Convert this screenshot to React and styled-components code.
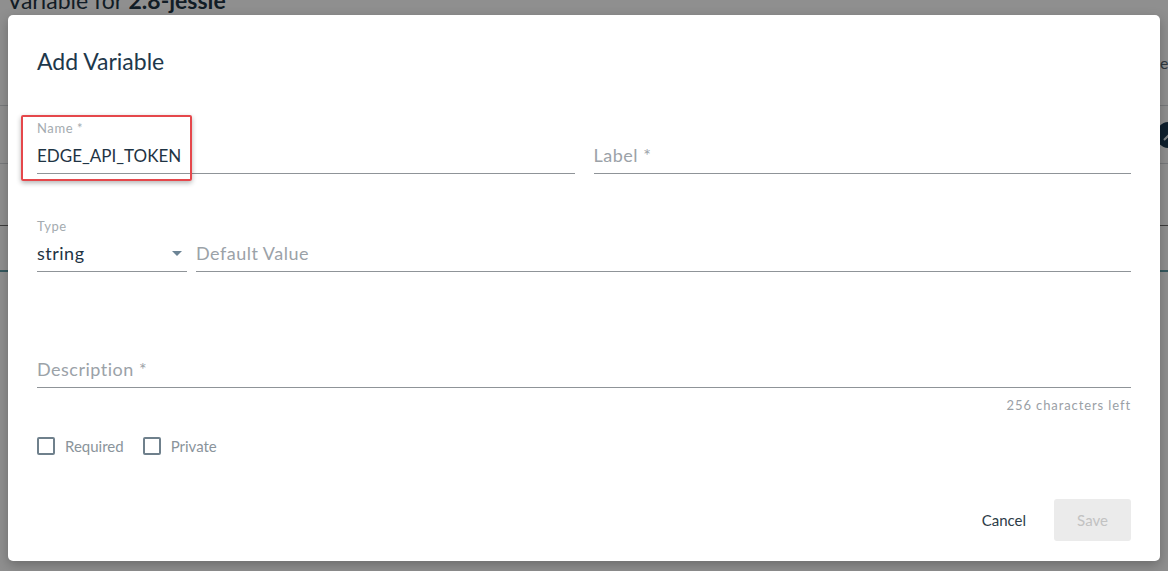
import React from "react";
import styled, { createGlobalStyle } from "styled-components";

const Global = createGlobalStyle`
  html, body { margin: 0; padding: 0; }
  body {
    width: 1168px;
    height: 571px;
    overflow: hidden;
    background: #ffffff;
    font-family: "Lato", "Noto Sans", sans-serif;
  }
  #root { height: 571px; }
`;

/* ---------- background page ---------- */
const Page = styled.div`
  position: relative;
  height: 571px;
  overflow: hidden;
  background: #ffffff;
  color: #1f3444;
`;

const PageHeading = styled.h1`
  margin: -15px 0 0 7px;
  font-size: 23px;
  font-weight: 400;
  line-height: 30px;
  color: #1f3444;
  b { font-weight: 700; }
`;

const HeaderBar = styled.div`
  height: 90px;
  display: flex;
  align-items: center;
  justify-content: flex-end;
  border-bottom: 1px solid #d4d8db;
  font-size: 16px;
  color: #556570;
  span { margin-right: -8px; padding-top: 4px; }
`;

const TableRow = styled.div`
  height: ${(p) => p.$h}px;
  display: flex;
  align-items: center;
  justify-content: flex-end;
  border-bottom: 1px solid ${(p) => p.$line};
`;

const RoundIcon = styled.div`
  width: 26px;
  height: 26px;
  margin-right: -14px;
  border-radius: 50%;
  background: #1c3a52;
  display: flex;
  align-items: center;
  justify-content: center;
`;

const TabLine = styled.div`
  height: 2px;
  background: #5f9ea8;
`;

/* ---------- overlay + modal ---------- */
const Overlay = styled.div`
  position: absolute;
  inset: 0;
  background: rgba(0, 0, 0, 0.44);
`;

const Modal = styled.div`
  position: absolute;
  left: 8px;
  top: 15px;
  width: 1152px;
  height: 546px;
  box-sizing: border-box;
  padding: 32px 29px 20px 29px;
  background: #ffffff;
  border-radius: 5px;
  box-shadow: 0 4px 12px rgba(0, 0, 0, 0.25);
  display: flex;
  flex-direction: column;
`;

const Title = styled.h2`
  margin: 0;
  font-size: 23px;
  line-height: 28px;
  font-weight: 400;
  color: #1e384b;
`;

const Row = styled.div`
  display: grid;
  grid-template-columns: ${(p) => p.$cols};
  column-gap: ${(p) => p.$gap}px;
  margin-top: ${(p) => p.$mt}px;
`;

const Field = styled.div`
  position: relative;
  display: flex;
  flex-direction: column;
  border-bottom: 1px solid #8f9498;
`;

const FieldLabel = styled.div`
  height: 18px;
  font-size: 13px;
  line-height: 18px;
  letter-spacing: 0.6px;
  color: #a4abb0;
`;

const InputArea = styled.div`
  height: 36px;
  display: flex;
  align-items: center;
  justify-content: space-between;
  font-size: ${(p) => (p.$caps ? 17 : 18)}px;
  letter-spacing: ${(p) => (p.$caps ? 0 : 0.5)}px;
  color: ${(p) => (p.$placeholder ? "#9ba2a8" : "#1f3444")};
`;

const Caret = styled.span`
  width: 0;
  height: 0;
  margin-right: 5px;
  border-left: 5px solid transparent;
  border-right: 5px solid transparent;
  border-top: 5px solid #6c8495;
`;

const Highlight = styled.div`
  position: absolute;
  left: -16px;
  top: -4px;
  width: 171px;
  height: 66px;
  box-sizing: border-box;
  border: 2px solid #e5474b;
  border-radius: 2px;
  box-shadow: 0 2px 5px rgba(0, 0, 0, 0.3);
  pointer-events: none;
`;

const Helper = styled.div`
  margin-top: 9px;
  text-align: right;
  font-size: 13px;
  line-height: 16px;
  letter-spacing: 0.9px;
  color: #9aa0a6;
`;

const Checks = styled.div`
  margin-top: 24px;
  display: flex;
  align-items: center;
  gap: 19px;
`;

const CheckLabel = styled.label`
  display: flex;
  align-items: center;
  gap: 10px;
  font-size: 15px;
  color: #8a949b;
`;

const Box = styled.span`
  width: 18px;
  height: 18px;
  box-sizing: border-box;
  border: 2px solid #6f808c;
  border-radius: 2px;
`;

const Actions = styled.div`
  margin-top: auto;
  display: flex;
  justify-content: flex-end;
  align-items: center;
  gap: 28px;
`;

const TextButton = styled.button`
  border: none;
  background: none;
  padding: 0;
  font-family: inherit;
  font-size: 15px;
  color: #2d3c47;
`;

const SaveButton = styled.button`
  width: 77px;
  height: 42px;
  border: none;
  border-radius: 3px;
  background: #ebebeb;
  font-family: inherit;
  font-size: 15px;
  color: #c2c2c2;
`;

export default function App() {
  return (
    <>
      <Global />
      <Page>
        <PageHeading>
          Variable for <b>2.8-jessie</b>
        </PageHeading>
        <HeaderBar>
          <span>ec</span>
        </HeaderBar>
        <TableRow $h={57} $line="#d4d8db">
          <RoundIcon>
            <svg width="14" height="14" viewBox="0 0 14 14">
              <path d="M2 12 L11 3" stroke="#e6ecef" strokeWidth="2" />
            </svg>
          </RoundIcon>
        </TableRow>
        <TableRow $h={61} $line="#6d6d6d" />
        <TableRow $h={43} $line="transparent" />
        <TabLine />

        <Overlay />
        <Modal>
          <Title>Add Variable</Title>

          <Row $cols="1fr 1fr" $gap={19} $mt={44}>
            <Field>
              <FieldLabel>Name *</FieldLabel>
              <InputArea $caps>EDGE_API_TOKEN</InputArea>
              <Highlight />
            </Field>
            <Field>
              <FieldLabel />
              <InputArea $placeholder>Label *</InputArea>
            </Field>
          </Row>

          <Row $cols="150px 1fr" $gap={9} $mt={43}>
            <Field>
              <FieldLabel>Type</FieldLabel>
              <InputArea>
                string
                <Caret />
              </InputArea>
            </Field>
            <Field>
              <FieldLabel />
              <InputArea $placeholder>Default Value</InputArea>
            </Field>
          </Row>

          <Row $cols="1fr" $gap={0} $mt={61}>
            <Field>
              <FieldLabel />
              <InputArea $placeholder>Description *</InputArea>
            </Field>
          </Row>
          <Helper>256 characters left</Helper>

          <Checks>
            <CheckLabel>
              <Box />
              Required
            </CheckLabel>
            <CheckLabel>
              <Box />
              Private
            </CheckLabel>
          </Checks>

          <Actions>
            <TextButton>Cancel</TextButton>
            <SaveButton disabled>Save</SaveButton>
          </Actions>
        </Modal>
      </Page>
    </>
  );
}
